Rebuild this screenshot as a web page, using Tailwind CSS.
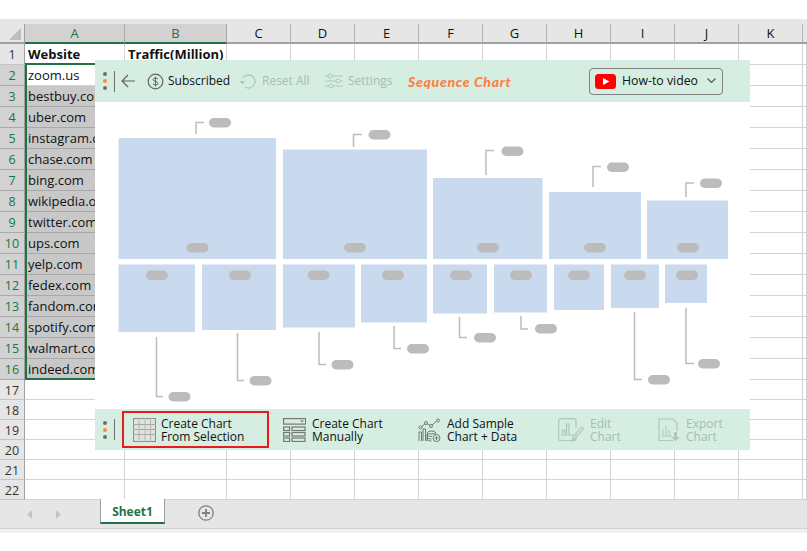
<!DOCTYPE html>
<html lang="en">
<head>
    <meta charset="UTF-8">
    <title>Sequence Chart</title>
    <script src="https://cdn.jsdelivr.net/npm/@tailwindcss/browser@4"></script>
</head>
<body class="bg-white w-[807px] h-[551px] overflow-hidden relative font-['Open_Sans',sans-serif] text-[#111]">
    <!-- spreadsheet -->
    <div class="h-[19px] bg-white"></div>
    <div class="h-[5px] bg-[#e6e6e6]"></div>
    <div id="sheet" class="grid grid-cols-[25px_100px_102px_64px_64px_64px_64px_64px_64px_64px_64px_64px_4px] grid-rows-[20px_21px_21px_21px_21px_21px_21px_21px_21px_21px_21px_21px_21px_21px_21px_21px_21px_20px_20px_20px_20px_20px_20px] text-[13px] leading-[19px]"></div>

    <!-- selection outline -->
    <div class="absolute left-[25px] top-[63px] w-[202px] h-[317px] border-2 border-[#217346]"></div>

    <!-- tabs -->
    <div class="h-[29px] -mt-px bg-[#e6e6e6] border-t border-[#a0a0a0] flex items-stretch">
        <div class="w-[100px] flex items-center gap-[22px] pl-[27px]">
            <svg width="6" height="9" viewBox="0 0 6 9"><path d="M5 0 L0 4.500 L5 9Z" fill="#c4c4c4"/></svg>
            <svg width="6" height="9" viewBox="0 0 6 9"><path d="M1 0 L6 4.500 L1 9Z" fill="#c4c4c4"/></svg>
        </div>
        <div class="w-[65px] h-[25px] -mt-px pt-[2px] bg-white border-x border-[#9e9e9e] border-b-2 border-b-[#217346] flex items-center justify-center font-bold text-[12px] text-[#217346]">Sheet1</div>
        <div class="pl-[33px] pt-[5px]">
            <svg width="16" height="16" viewBox="0 0 16 16" fill="none" stroke="#808080"><circle cx="8" cy="8" r="7.200" stroke-width="1.300"/><path d="M4 8H12M8 4V12" stroke-width="1.800"/></svg>
        </div>
    </div>
    <div class="h-[5px] bg-[#f0f0f0] border-t border-[#d0d0d0]"></div>

    <!-- add-in panel -->
    <div class="absolute left-[95px] top-[60px] w-[655px] h-[390px] bg-white flex flex-col">
        <div class="h-[42px] bg-[#d5eee1] flex items-center text-[12px]">
            <div class="w-[19px] pl-px flex flex-col items-center gap-[3px]">
                <span class="w-[4px] h-[4px] rounded-full bg-[#6e6e6e]"></span>
                <span class="w-[4px] h-[4px] rounded-full bg-[#ff8a3d]"></span>
                <span class="w-[4px] h-[4px] rounded-full bg-[#6e6e6e]"></span>
            </div>
            <span class="w-px h-[21px] bg-[#6e6e6e]"></span>
            <svg class="ml-[6px]" width="14" height="14" viewBox="0 0 14 14" fill="none" stroke="#5f5f5f" stroke-width="1.200"><path d="M14 7H1M7 1L1 7L7 13"/></svg>
            <svg class="ml-[12px]" width="17" height="17" viewBox="0 0 17 17" fill="none" stroke="#666"><circle cx="8.500" cy="8.500" r="7.300" stroke-width="1.200"/><path d="M11 6C10.500 4.800 6 4.600 6 6.500C6 8.800 11 8 11 10.500C11 12.400 6.500 12.200 6 11M8.500 3.500V13.500" stroke-width="1"/></svg>
            <span class="ml-[4px] w-[71px]">Subscribed</span>
            <svg width="18" height="18" viewBox="0 0 18 18" fill="none" stroke="#b0c8bb" stroke-width="1.300"><path d="M4 6A6.500 6.500 0 1 1 6 15"/><path d="M0.500 9H6L3.500 12.500Z" fill="#b0c8bb" stroke="none"/></svg>
            <span class="ml-[5px] w-[63px] text-[#a5bdb0]">Reset All</span>
            <svg width="18" height="16" viewBox="0 0 18 16" fill="none" stroke="#b0c8bb" stroke-width="1"><path d="M0 3H3M7 3H18M0 8H11M15 8H18M0 13H4M8 13H18"/><circle cx="5" cy="3" r="2"/><circle cx="13" cy="8" r="2"/><circle cx="6" cy="13" r="2"/></svg>
            <span class="ml-[5px] w-[60px] text-[#a5bdb0]">Settings</span>
            <span class="w-[181px] font-['Lato',sans-serif] italic font-black text-[14px] tracking-[0.7px] text-[#ff7f41]">Sequence Chart</span>
            <div class="w-[134px] h-[27px] border border-[#808080] rounded-[4px] flex items-center pl-[5px]">
                <svg width="21" height="15" viewBox="0 0 21 15"><rect width="21" height="15" rx="3.500" fill="#ff0000"/><path d="M8 4L14.500 7.500L8 11Z" fill="#fff"/></svg>
                <span class="ml-[6px] w-[85px] text-[12.300px]">How-to video</span>
                <svg width="9" height="6" viewBox="0 0 9 6" fill="none" stroke="#555" stroke-width="1.200"><path d="M0.500 0.500L4.500 4.500L8.500 0.500"/></svg>
            </div>
        </div>

        <svg class="h-[307px] w-[655px]" viewBox="95 102 655 307">
            <g fill="#c9daef">
                <rect x="118.500" y="138" width="157.500" height="121" rx="1"/>
                <rect x="283" y="149.500" width="144" height="109.500"/>
                <rect x="433" y="178" width="109.500" height="81"/>
                <rect x="549" y="192" width="92" height="67"/>
                <rect x="647" y="200.500" width="81" height="58.500"/>
                <rect x="118.500" y="264.500" width="76.500" height="67.500"/>
                <rect x="202" y="264.500" width="74" height="65.500"/>
                <rect x="283" y="264.500" width="72" height="63"/>
                <rect x="361" y="264.500" width="66" height="58"/>
                <rect x="433" y="264.500" width="54" height="49"/>
                <rect x="494" y="264.500" width="53" height="48"/>
                <rect x="554" y="264.500" width="50" height="45.500"/>
                <rect x="611" y="264.500" width="48" height="43.500"/>
                <rect x="665" y="264.500" width="42" height="38.500"/>
            </g>
            <g fill="none" stroke="#bcbcbc" stroke-width="1.500">
                <path d="M196 134V122.500H204"/>
                <path d="M353.500 147V134.500H362"/>
                <path d="M486 175V150.500H494"/>
                <path d="M593 187V166.500H601"/>
                <path d="M686 197V183H694"/>
                <path d="M156.500 337V396.500H163"/>
                <path d="M237.500 333V380.500H244"/>
                <path d="M319 332V364.500H326"/>
                <path d="M394 326V348.500H401"/>
                <path d="M459.500 317V337.500H467"/>
                <path d="M521 316V329H528"/>
                <path d="M634.500 312V379.500H642"/>
                <path d="M686 308V363.500H694"/>
            </g>
            <g fill="#bcbcbc">
                <rect x="209" y="118" width="22" height="9.500" rx="4.700"/>
                <rect x="368.500" y="130" width="22" height="9.500" rx="4.700"/>
                <rect x="501.500" y="146.500" width="22" height="9.500" rx="4.700"/>
                <rect x="607" y="162.500" width="22" height="9.500" rx="4.700"/>
                <rect x="700" y="178.500" width="22" height="9.500" rx="4.700"/>
                <rect x="186.500" y="243" width="22" height="9.500" rx="4.700"/>
                <rect x="344" y="243" width="22" height="9.500" rx="4.700"/>
                <rect x="477" y="243" width="22" height="9.500" rx="4.700"/>
                <rect x="584" y="243" width="22" height="9.500" rx="4.700"/>
                <rect x="677" y="243" width="22" height="9.500" rx="4.700"/>
                <rect x="146" y="270.500" width="22" height="9.500" rx="4.700"/>
                <rect x="229" y="270.500" width="22" height="9.500" rx="4.700"/>
                <rect x="307.500" y="270.500" width="22" height="9.500" rx="4.700"/>
                <rect x="382" y="270.500" width="22" height="9.500" rx="4.700"/>
                <rect x="450" y="270.500" width="22" height="9.500" rx="4.700"/>
                <rect x="510" y="270.500" width="22" height="9.500" rx="4.700"/>
                <rect x="568" y="270.500" width="22" height="9.500" rx="4.700"/>
                <rect x="624" y="270.500" width="22" height="9.500" rx="4.700"/>
                <rect x="676" y="270.500" width="22" height="9.500" rx="4.700"/>
                <rect x="168.500" y="392" width="22" height="9.500" rx="4.700"/>
                <rect x="249.500" y="376" width="22" height="9.500" rx="4.700"/>
                <rect x="331.500" y="360" width="22" height="9.500" rx="4.700"/>
                <rect x="407" y="344" width="22" height="9.500" rx="4.700"/>
                <rect x="474" y="333" width="22" height="9.500" rx="4.700"/>
                <rect x="535" y="324" width="22" height="9.500" rx="4.700"/>
                <rect x="648" y="375" width="22" height="9.500" rx="4.700"/>
                <rect x="698" y="359" width="22" height="9.500" rx="4.700"/>
            </g>
        </svg>

        <div class="h-[41px] bg-[#d5eee1] flex items-center text-[12px] leading-[13px]">
            <div class="w-[19px] pl-px flex flex-col items-center gap-[3px]">
                <span class="w-[4px] h-[4px] rounded-full bg-[#6e6e6e]"></span>
                <span class="w-[4px] h-[4px] rounded-full bg-[#ff8a3d]"></span>
                <span class="w-[4px] h-[4px] rounded-full bg-[#6e6e6e]"></span>
            </div>
            <span class="w-px h-[21px] bg-[#6e6e6e]"></span>
            <div class="ml-[7px] w-[147px] h-[37px] border-2 border-[#e81c1c] flex items-center pl-[9px] gap-[5px]">
                <svg width="23" height="24" viewBox="0 0 23 24" fill="none" stroke="#8c8c8c" stroke-width="1"><rect x="0.500" y="0.500" width="22" height="23" fill="#dfe3dc"/><path d="M0 6.500H23M0 11.500H23M0 16.500H23" stroke="#a8a8a8"/><path d="M6 0V24M12 0V24M17.500 0V24" stroke="#b4b4b4"/></svg>
                <span>Create Chart<br>From Selection</span>
            </div>
            <div class="ml-[14px] w-[135px] flex items-center gap-[6px]">
                <svg width="23" height="24" viewBox="0 0 23 24" fill="none" stroke="#777" stroke-width="1.200"><rect x="0.600" y="0.600" width="22" height="5.500"/><path d="M17 2.500L19 4.500L21 2.500" fill="#777" stroke="none"/><rect x="0.600" y="9" width="6" height="3.500"/><rect x="9" y="9" width="13" height="3.500"/><rect x="0.600" y="14.500" width="6" height="3.500"/><rect x="9" y="14.500" width="13" height="3.500"/><rect x="0.600" y="20" width="6" height="3.500"/><rect x="9" y="20" width="13" height="3.500"/></svg>
                <span>Create Chart<br>Manually</span>
            </div>
            <div class="w-[140px] flex items-center gap-[6px]">
                <svg width="23" height="24" viewBox="0 0 23 24" fill="none" stroke="#777" stroke-width="1"><path d="M2 10L8 5L13 8L20 2"/><circle cx="2.500" cy="9.500" r="1.500" fill="#d5eee1"/><circle cx="8" cy="5" r="1.500" fill="#d5eee1"/><circle cx="13" cy="8" r="1.500" fill="#d5eee1"/><circle cx="20" cy="2.500" r="1.500" fill="#d5eee1"/><path d="M1 23V14H3.500V23M5 23V11H7.500V23M9 23V16"/><ellipse cx="13.500" cy="14.500" rx="4" ry="1.500"/><path d="M9.500 14.500V21.500C9.500 22.500 12 23 13.500 23M17.500 14.500V17M9.500 17C10 18 12 18.500 14 18.500M9.500 19.500C10 20.500 12 21 13.500 21"/><circle cx="18.500" cy="20" r="3.500"/><path d="M16.500 20H20.500M18.500 18V22"/></svg>
                <span>Add Sample<br>Chart + Data</span>
            </div>
            <div class="w-[100px] flex items-center gap-[6px] text-[#a5bdb0]">
                <svg width="26" height="24" viewBox="0 0 26 24" fill="none" stroke="#b0c8bb" stroke-width="1.200"><path d="M18 16V20.500C18 21.500 17 22.500 16 22.500H3C1.500 22.500 0.600 21.500 0.600 20.500V3C0.600 1.500 1.500 0.600 3 0.600H16C17 0.600 18 1.500 18 3V10"/><path d="M4.500 16V12H7V16M8.500 16V6H11V16M3 17H15"/><path d="M14 23L15.500 18L23.500 9L25.500 11L17.500 20Z"/></svg>
                <span>Edit<br>Chart</span>
            </div>
            <div class="flex items-center gap-[6px] text-[#a5bdb0]">
                <svg width="22" height="24" viewBox="0 0 22 24" fill="none" stroke="#b0c8bb" stroke-width="1.200"><path d="M15 22.500H1V1H15L19 5V13"/><path d="M5 17V11M8 17V8M11 17V12M3.500 18H14" stroke-width="1"/><path d="M16 14H19V19H21.500L17.500 23.500L13.500 19H16Z" fill="#b0c8bb" stroke="none"/></svg>
                <span>Export<br>Chart</span>
            </div>
        </div>
    </div>

    <script>
        const sites = ['zoom.us','bestbuy.com','uber.com','instagram.com','chase.com','bing.com','wikipedia.org','twitter.com','ups.com','yelp.com','fedex.com','fandom.com','spotify.com','walmart.com','indeed.com'];
        const letters = ['A','B','C','D','E','F','G','H','I','J','K'];
        let html = '<div class="bg-[#e6e6e6] border-r border-b-2 border-[#a0a0a0] flex items-end justify-end pr-[3px] pb-[2px]"><svg width="12" height="12" viewBox="0 0 12 12"><path d="M12 0V12H0Z" fill="#bdbdbd"/></svg></div>';

        // column headers
        letters.forEach((c, i) => {
            if (i < 2) {
                html += '<div class="bg-[#d2d2d2] border-r border-[#a8a8a8] border-b-2 border-b-[#217346] text-center text-[#217346]">' + c + '</div>';
            } else {
                html += '<div class="bg-[#e6e6e6] border-r border-[#b4b4b4] border-b-2 border-b-[#a0a0a0] text-center">' + c + '</div>';
            }
        });
        html += '<div class="bg-[#e6e6e6] border-b-2 border-[#a0a0a0]"></div>';

        for (let r = 1; r <= 22; r++) {
            const picked = r >= 2 && r <= 16;
            if (picked) {
                html += '<div class="bg-[#d2d2d2] border-r border-r-[#a0a0a0] border-b border-b-[#a8a8a8] text-center text-[12.500px] pt-px text-[#217346]">' + r + '</div>';
            } else {
                html += '<div class="bg-[#e6e6e6] border-r border-r-[#a0a0a0] border-b border-b-[#c4c4c4] text-center text-[12.500px] pt-px text-[#333]">' + r + '</div>';
            }
            for (let c = 0; c < 12; c++) {
                let text = '';
                if (r === 1 && c === 0) text = '<b>Website</b>';
                if (r === 1 && c === 1) text = '<b>Traffic(Million)</b>';
                if (picked && c === 0) text = sites[r - 2];
                if (picked && c < 2 && r > 2) {
                    html += '<div class="bg-[#c8c8c8] border-r border-b border-[#a8a8a8] pl-[3px] pt-px whitespace-nowrap overflow-hidden">' + text + '</div>';
                } else {
                    html += '<div class="bg-white border-r border-b border-[#d4d4d4] pl-[3px] pt-px whitespace-nowrap overflow-hidden">' + text + '</div>';
                }
            }
        }
        document.getElementById('sheet').innerHTML = html;
    </script>
</body>
</html>
